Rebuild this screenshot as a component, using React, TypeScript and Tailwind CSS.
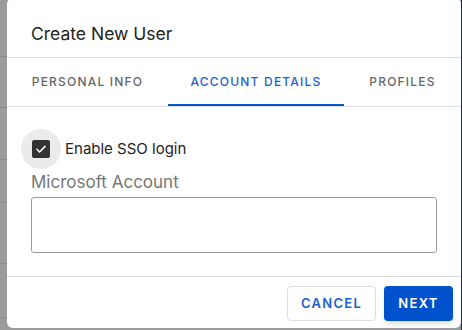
import React, { useState } from 'react';

const tabs = [
  { id: 'personal', label: 'PERSONAL INFO', w: 'w-[161px]' },
  { id: 'account', label: 'ACCOUNT DETAILS', w: 'w-[176px]' },
  { id: 'profiles', label: 'PROFILES', w: 'flex-1' },
];

export default function App() {
  const [active, setActive] = useState('account');
  const [sso, setSso] = useState(true);
  const [account, setAccount] = useState('');

  return (
    <div
      className="flex h-[330px] w-[462px] overflow-hidden bg-[#9b9b9b]"
      style={{ fontFamily: 'Inter, "Noto Sans", sans-serif' }}
    >
      {/* backdrop strip */}
      <div className="flex w-[7px] flex-col">
        <div className="h-[57px] border-b border-[#8a8a8a]" />
        <div className="h-[51px] border-b border-[#8a8a8a]" />
        <div className="h-[52px] border-b border-[#8a8a8a]" />
        <div className="h-[43px] border-b border-[#8a8a8a]" />
        <div className="h-[61px] border-b border-[#8a8a8a]" />
        <div className="h-[54px] border-b border-[#8a8a8a]" />
      </div>

      {/* dialog */}
      <div className="mt-[-2px] flex h-[330px] w-[454px] flex-col rounded-[6px] bg-white">
        <div className="h-[60px] border-b border-[#dddddd] px-6 pt-[24px] text-[17.5px] leading-[24px] text-[#222222]">
          Create New User
        </div>

        <div className="flex h-[49px] border-b border-[#dddddd]">
          {tabs.map((t) => (
            <button
              key={t.id}
              onClick={() => setActive(t.id)}
              className={`${t.w} relative flex items-center justify-center text-[12px] font-medium tracking-[0.1em] ${
                active === t.id ? 'text-[#1a5fd0]' : 'text-[#666666]'
              }`}
            >
              {t.label}
              {active === t.id && (
                <span className="absolute bottom-0 left-0 right-0 h-[2.5px] bg-[#0b55cf]" />
              )}
            </button>
          ))}
        </div>

        <div className="flex flex-col px-6 pt-[22px]">
          <label className="flex h-[40px] items-center">
            <span className="ml-[-10px] flex h-[40px] w-[40px] items-center justify-center rounded-full bg-[#ebebeb]">
              <input
                type="checkbox"
                checked={sso}
                onChange={(e) => setSso(e.target.checked)}
                className="hidden"
              />
              <span className="flex h-[18px] w-[18px] items-center justify-center rounded-[2px] bg-[#333333]">
                {sso && (
                  <svg width="14" height="14" viewBox="0 0 24 24" fill="none">
                    <path
                      d="M5 12.5l4.5 4.5L19 7.5"
                      stroke="white"
                      strokeWidth="2.6"
                      strokeLinecap="round"
                      strokeLinejoin="round"
                    />
                  </svg>
                )}
              </span>
            </span>
            <span className="ml-[4px] text-[15px] text-[#222222]">Enable SSO login</span>
          </label>

          <span className="mt-[2px] text-[17px] leading-[22px] text-[#777777]">
            Microsoft Account
          </span>
          <input
            value={account}
            onChange={(e) => setAccount(e.target.value)}
            className="mt-[4px] h-[56px] w-[406px] rounded-[3px] border border-[#9a9a9a] px-3 outline-none"
          />
        </div>

        <div className="mt-[23px] flex flex-1 items-start justify-end gap-2 border-t border-[#dddddd] px-2 pt-[9px]">
          <button className="h-[35px] w-[89px] rounded-[4px] border border-[#dddddd] text-[13px] font-semibold tracking-[0.1em] text-[#1a5fd0]">
            CANCEL
          </button>
          <button className="h-[35px] w-[69px] rounded-[4px] bg-[#0052cc] text-[13px] font-semibold tracking-[0.1em] text-white shadow-md">
            NEXT
          </button>
        </div>
      </div>

      <div className="w-px bg-[#0b2b6e]" />
    </div>
  );
}
